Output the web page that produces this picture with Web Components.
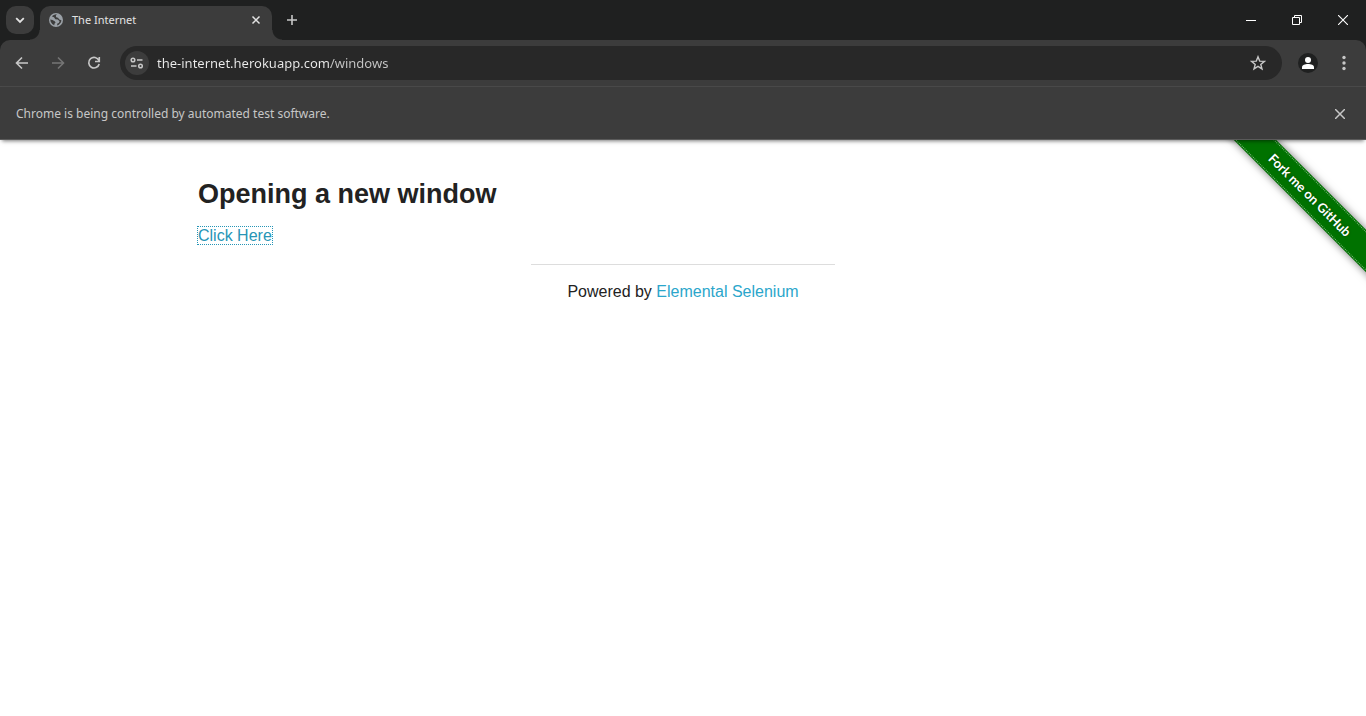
<!DOCTYPE html>
<html lang="en">
<head>
<meta charset="utf-8">
<title>The Internet</title>
<style>
html, body { margin: 0; min-height: 100vh; background: #fff; }
body { display: flex; flex-direction: column; font-family: "Noto Sans", "Open Sans", sans-serif; }
</style>
</head>
<body>
<browser-window></browser-window>

<template id="icon-button">
<style>
:host { display: block; flex: none; width: 28px; height: 28px; color: #c7c7c7; }
:host([wide]) { width: 46px; height: 40px; color: #fff; }
:host([small]) { width: 16px; height: 16px; }
:host([chip]) { width: 24px; height: 24px; }
:host([dim]) { color: #757575; }
button { display: flex; align-items: center; justify-content: center; width: 100%; height: 100%; padding: 0; border: 0; background: none; color: inherit; }
:host([tile]) button { background: #3c3c3c; border-radius: 10px; color: #e3e3e3; }
:host([chip]) button { background: #3c3c3c; border-radius: 50%; }
</style>
<button type="button"><slot></slot></button>
</template>

<template id="tab-strip">
<style>
:host { display: flex; align-items: flex-start; height: 40px; background: #1f2020; color: #e3e3e3; }
.search { padding: 6px 6px 0; }
.tab { position: relative; display: flex; align-items: center; box-sizing: border-box; width: 232px; height: 34px; margin-top: 6px; padding: 0 8px 6px; background: #3c3c3c; border-radius: 10px 10px 0 0; font-size: 11px; line-height: 16px; }
.tab::before, .tab::after { content: ""; position: absolute; bottom: 0; width: 10px; height: 10px; }
.tab::before { right: 100%; background: radial-gradient(circle at 0 0, transparent 9px, #3c3c3c 10px); }
.tab::after { left: 100%; background: radial-gradient(circle at 100% 0, transparent 9px, #3c3c3c 10px); }
.title { flex: 1; margin-left: 8px; }
.globe { flex: none; }
.new { margin: 6px 0 0 6px; }
.controls { display: flex; margin-left: auto; }
</style>
<div class="search"><icon-button tile label="Search tabs"><svg width="12" height="12" viewBox="0 0 12 12" fill="none" stroke="currentColor" stroke-width="1.8"><path d="M2.2 4.2 6 8l3.800-3.800"/></svg></icon-button></div>
<div class="tab">
<svg class="globe" width="16" height="16" viewBox="0 0 16 16"><circle cx="8" cy="8" r="7" fill="#9aa0a6"/><path fill="#3c3c3c" d="M8.800 2.200C7 2 5 3 4 4.400L6 5.200 7.300 7.200 9.800 7.500 11.600 9.300 10.800 10.900 9.400 11.500 9 13.600 10.800 12.800 13 10.200 13.400 8.200 11.300 7.400 10 5.800 8.200 5.200 7.800 3.800ZM2.300 7.500 4.500 8 6.700 9.300 7.600 10.600 6.600 11.600 6.200 13.300 4.200 12 2.700 9.800Z"/></svg>
<span class="title">The Internet</span>
<icon-button small label="Close tab"><svg width="10" height="10" viewBox="0 0 10 10" fill="none" stroke="#e3e3e3" stroke-width="1.500"><path d="m1.500 1.500 7 7m0-7-7 7"/></svg></icon-button>
</div>
<icon-button class="new" label="New tab"><svg width="12" height="12" viewBox="0 0 12 12" fill="none" stroke="currentColor" stroke-width="1.600"><path d="M6 1v10M1 6h10"/></svg></icon-button>
<div class="controls">
<icon-button wide label="Minimize"><svg width="10" height="10" viewBox="0 0 10 10"><path fill="currentColor" d="M0 5h10v1H0z"/></svg></icon-button>
<icon-button wide label="Restore"><svg width="10" height="10" viewBox="0 0 10 10" fill="none" stroke="currentColor"><path d="M.5 2.500h7v7h-7zM2.500 2.500v-2h7v7h-2"/></svg></icon-button>
<icon-button wide label="Close"><svg width="10" height="10" viewBox="0 0 10 10" fill="none" stroke="currentColor" stroke-width="1.100"><path d="m0 0 10 10m0-10L0 10"/></svg></icon-button>
</div>
</template>

<template id="address-bar">
<style>
:host { display: flex; flex: 1; align-items: center; min-width: 0; height: 34px; box-sizing: border-box; padding: 0 10px 0 5px; border-radius: 17px; background: #282828; }
input { flex: 1; min-width: 0; height: 24px; margin: 0 8px; padding: 0; border: 0; outline: 0; font: 13px/24px "Noto Sans", "Open Sans", sans-serif; color: #e3e3e3; background: linear-gradient(90deg, #ececec 174px, #c7c7c7 174px) text; -webkit-text-fill-color: transparent; }
</style>
<icon-button chip label="View site information"><svg width="14" height="12" viewBox="0 0 14 12" fill="none" stroke="currentColor" stroke-width="1.500"><circle cx="3" cy="3" r="1.800"/><path d="M7 3h5.500M1 9h5.500"/><circle cx="10.500" cy="9" r="1.800"/></svg></icon-button>
<input type="text" aria-label="Address and search bar" value="the-internet.herokuapp.com/windows" spellcheck="false">
<icon-button label="Bookmark this tab"><svg width="16" height="16" viewBox="0 0 16 16" fill="none" stroke="currentColor" stroke-width="1.400"><path d="m8 1.800 1.700 4.300 4.700.3-3.600 3 1.200 4.500-4-2.500-4 2.500 1.200-4.500-3.600-3 4.700-.3z"/></svg></icon-button>
</template>

<template id="browser-toolbar">
<style>
:host { display: block; background: #1f2020; }
nav { display: flex; align-items: center; gap: 8px; height: 46px; padding: 0 8px; background: #3c3c3c; border-radius: 10px 10px 0 0; }
:host::after { content: ""; display: block; height: 1px; background: #4a4a4a; }
address-bar { margin: 0 4px; }
</style>
<nav aria-label="Browser">
<icon-button label="Back"><svg width="14" height="14" viewBox="0 0 14 14" fill="none" stroke="currentColor" stroke-width="1.600"><path d="M13 7H2M7 1.500 1.500 7 7 12.500"/></svg></icon-button>
<icon-button dim label="Forward"><svg width="14" height="14" viewBox="0 0 14 14" fill="none" stroke="currentColor" stroke-width="1.600"><path d="M1 7h11M7 1.500 12.500 7 7 12.500"/></svg></icon-button>
<icon-button label="Reload"><svg width="14" height="14" viewBox="0 0 14 14" fill="none" stroke="currentColor" stroke-width="1.600"><path d="M11.900 4.500A5.300 5.300 0 1 0 12.200 8M12.300 1v4.500H8"/></svg></icon-button>
<address-bar></address-bar>
<icon-button label="Profile"><svg width="20" height="20" viewBox="0 0 20 20"><circle cx="10" cy="10" r="10" fill="#1f2020"/><g fill="#fff"><circle cx="10" cy="7" r="3"/><path d="M4 16v-1.700c0-2.300 3-3.300 6-3.300s6 1 6 3.300V16z"/></g></svg></icon-button>
<icon-button label="Menu"><svg width="4" height="16" viewBox="0 0 4 16" fill="currentColor"><circle cx="2" cy="2.500" r="1.700"/><circle cx="2" cy="8" r="1.700"/><circle cx="2" cy="13.500" r="1.700"/></svg></icon-button>
</nav>
</template>

<template id="info-bar">
<style>
:host { position: relative; display: flex; align-items: center; justify-content: space-between; box-sizing: border-box; height: 53px; padding: 1px 12px 0 16px; background: #3c3c3c; border-bottom: 1px solid #5a5a5a; box-shadow: 0 3px 4px -2px #0008; z-index: 2; color: #c7c7c7; font-size: 12px; line-height: 20px; }
</style>
<span><slot></slot></span>
<icon-button label="Dismiss"><svg width="10" height="10" viewBox="0 0 10 10" fill="none" stroke="currentColor" stroke-width="1.500"><path d="m0 0 10 10m0-10L0 10"/></svg></icon-button>
</template>

<template id="github-ribbon">
<style>
:host { position: absolute; top: 0; right: 0; width: 149px; height: 149px; overflow: hidden; }
a { position: absolute; left: -17px; top: 40px; width: 220px; height: 30px; box-sizing: border-box; padding: 1px 0; background: #007200; box-shadow: 0 0 8px #0008; transform: rotate(45deg); color: #fff; font: bold 13px/26px Lato, "Open Sans", sans-serif; text-align: center; text-decoration: none; text-shadow: 0 0 3px #0006; }
span { display: block; height: 26px; border: 1px dotted #80b880; border-width: 1px 0; }
</style>
<a href="#fork"><span><slot></slot></span></a>
</template>

<template id="page-content">
<style>
:host { position: relative; display: block; flex: 1; color: #222; font: 16px/24px "Liberation Sans", Arial, sans-serif; }
main, footer { box-sizing: border-box; max-width: 1000px; margin: 0 auto; padding: 0 15px; }
main { padding-top: 35px; }
h3 { margin: 0 0 11px; font-size: 27px; line-height: 38px; }
a { color: #2ba6cb; text-decoration: none; }
main a { outline: 1px dotted #2795b6; color: #2795b6; }
.powered { width: 33.333%; box-sizing: border-box; margin: 0 auto; padding: 0 15px; text-align: center; }
footer { padding: 16px 0 0; }
hr { margin: 0 0 15px; border: 0; border-top: 1px solid #ddd; }
</style>
<github-ribbon>Fork me on GitHub</github-ribbon>
<main><h3>Opening a new window</h3><a href="#windows">Click Here</a></main>
<footer><div class="powered"><hr>Powered by <a href="#elemental">Elemental Selenium</a></div></footer>
</template>

<template id="browser-window">
<style>:host { display: flex; flex-direction: column; flex: 1; }</style>
<tab-strip></tab-strip>
<browser-toolbar></browser-toolbar>
<info-bar>Chrome is being controlled by automated test software.</info-bar>
<page-content></page-content>
</template>

<script>
class TemplateElement extends HTMLElement {
  constructor() {
    super();
    const template = document.getElementById(this.localName);
    this.attachShadow({ mode: "open" }).append(template.content.cloneNode(true));
  }
}
class IconButton extends TemplateElement {
  connectedCallback() {
    this.shadowRoot.querySelector("button").setAttribute("aria-label", this.getAttribute("label"));
  }
}
customElements.define("icon-button", IconButton);
for (const name of ["tab-strip", "address-bar", "browser-toolbar", "info-bar", "github-ribbon", "page-content", "browser-window"]) {
  customElements.define(name, class extends TemplateElement {
    constructor() { super(); }
  });
}
</script>
</body>
</html>
